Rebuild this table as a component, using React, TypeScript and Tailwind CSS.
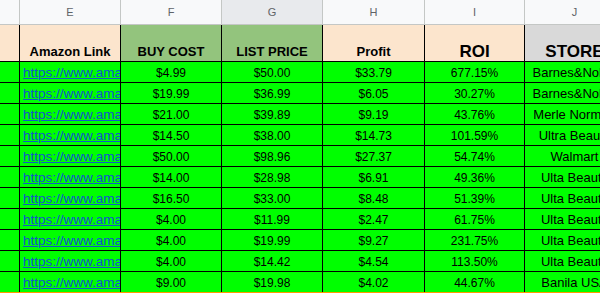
import React from 'react';

const cols = ['w-[20px]', 'w-[101px]', 'w-[101px]', 'w-[101px]', 'w-[102px]', 'w-[100px]', 'w-[100px]'];

const letters = ['', 'E', 'F', 'G', 'H', 'I', 'J'];

const headers: { label: string; bg: string; size: string }[] = [
  { label: '', bg: 'bg-[#fce5cd]', size: 'text-[13px]' },
  { label: 'Amazon Link', bg: 'bg-[#fce5cd]', size: 'text-[13px]' },
  { label: 'BUY COST', bg: 'bg-[#93c47d]', size: 'text-[13px]' },
  { label: 'LIST PRICE', bg: 'bg-[#93c47d]', size: 'text-[13px]' },
  { label: 'Profit', bg: 'bg-[#fce5cd]', size: 'text-[13px]' },
  { label: 'ROI', bg: 'bg-[#fce5cd]', size: 'text-[17px]' },
  { label: 'STORE', bg: 'bg-[#d9d9d9]', size: 'text-[17px]' },
];

const rows = [
  ['$4.99', '$50.00', '$33.79', '677.15%', 'Barnes&Noble'],
  ['$19.99', '$36.99', '$6.05', '30.27%', 'Barnes&Noble'],
  ['$21.00', '$39.89', '$9.19', '43.76%', 'Merle Norman'],
  ['$14.50', '$38.00', '$14.73', '101.59%', 'Ultra Beauty'],
  ['$50.00', '$98.96', '$27.37', '54.74%', 'Walmart'],
  ['$14.00', '$28.98', '$6.91', '49.36%', 'Ulta Beauty'],
  ['$16.50', '$33.00', '$8.48', '51.39%', 'Ulta Beauty'],
  ['$4.00', '$11.99', '$2.47', '61.75%', 'Ulta Beauty'],
  ['$4.00', '$19.99', '$9.27', '231.75%', 'Ulta Beauty'],
  ['$4.00', '$14.42', '$4.54', '113.50%', 'Ulta Beauty'],
  ['$9.00', '$19.98', '$4.02', '44.67%', 'Banila USA'],
];

export default function App() {
  return (
    <div className="w-[600px] h-[295px] overflow-hidden bg-white font-['Liberation_Sans',Arial,sans-serif]">
      <div className="w-[700px]">
        {/* column letters */}
        <div className="flex h-[25px]">
          {letters.map((l, i) => (
            <div
              key={i}
              className={`${cols[i]} shrink-0 flex items-center justify-center border-r border-b border-[#c4c7c5] text-[11px] text-[#5f6368] ${l === 'G' ? 'bg-[#e8eaed]' : 'bg-[#f8f9fa]'}`}
            >
              {l}
            </div>
          ))}
        </div>

        {/* header row */}
        <div className="flex h-[37px]">
          {headers.map((h, i) => (
            <div
              key={i}
              className={`${cols[i]} ${h.bg} shrink-0 flex items-end justify-center pb-[1px] leading-[17px] border-r border-b border-black font-bold text-black ${h.size}`}
            >
              {h.label}
            </div>
          ))}
        </div>

        {/* data rows */}
        {rows.map((r, ri) => (
          <div key={ri} className={`flex h-[21px] bg-[#00ff00] border-b ${ri === rows.length - 1 ? 'border-[#ff9900]' : 'border-black'}`}>
            <div className={`${cols[0]} shrink-0 border-r border-black`} />
            <div className={`${cols[1]} shrink-0 border-r border-black overflow-hidden whitespace-nowrap pl-[3px] pt-[2px] flex items-center text-[13.5px] text-[#1155cc] underline`}>
              <span className="overflow-hidden">https://www.amazon.com/dp/</span>
            </div>
            {r.map((v, vi) => (
              <div
                key={vi}
                className={`${cols[vi + 2]} shrink-0 border-r border-black flex items-center justify-center pt-[2px] whitespace-nowrap text-black ${vi === 4 ? 'text-[13px]' : 'text-[12px]'}`}
              >
                {v}
              </div>
            ))}
          </div>
        ))}
      </div>
    </div>
  );
}
